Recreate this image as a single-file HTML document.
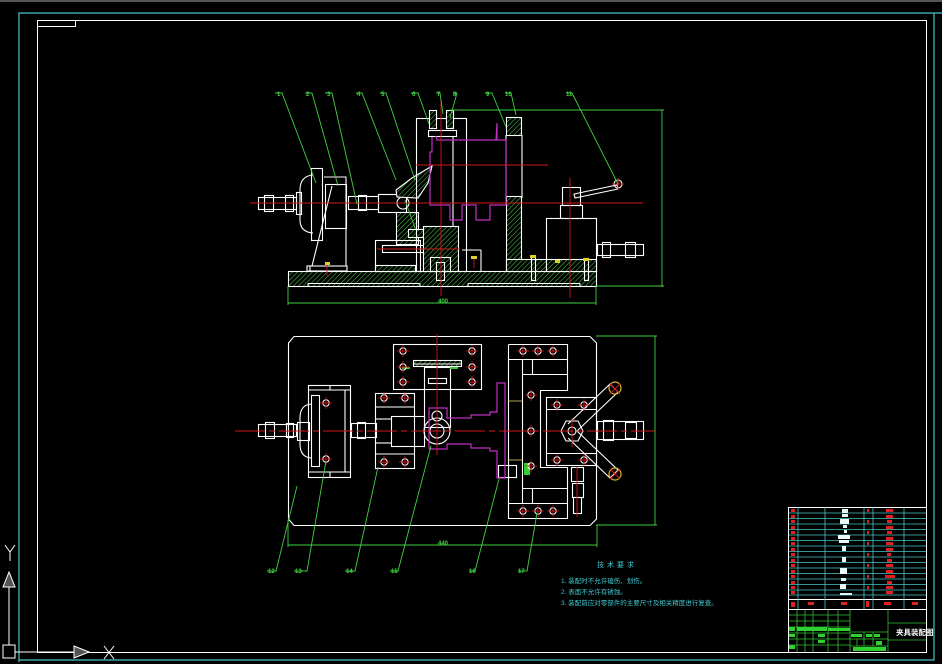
<!DOCTYPE html>
<html><head><meta charset="utf-8"><style>
html,body{margin:0;padding:0;background:#000;width:942px;height:664px;overflow:hidden}
svg{display:block}
text{font-family:"Liberation Sans","Noto Sans CJK SC",sans-serif}
</style></head><body>
<svg width="942" height="664" viewBox="0 0 942 664" xmlns="http://www.w3.org/2000/svg">
<defs>
<pattern id="ht" width="3.5" height="3.5" patternUnits="userSpaceOnUse" patternTransform="rotate(45)">
<rect width="4" height="4" fill="#000"/><line x1="0" y1="0" x2="0" y2="4" stroke="#4cd04c" stroke-width="1"/>
</pattern>
<g id="h"><circle r="3.2" fill="none" stroke="#fff" stroke-width="1"/><line x1="-6" y1="0" x2="6" y2="0" stroke="#e01010" stroke-width="0.8"/><line x1="0" y1="-6" x2="0" y2="6" stroke="#e01010" stroke-width="0.8"/></g>
</defs>
<rect width="942" height="664" fill="#000"/>
<rect x="0" y="0" width="942" height="2" fill="#555"/>
<polyline points="19,662 19,13 942,13" fill="none" stroke="#46c6c6" stroke-width="1.2"/>
<polyline points="934,13 934,660 19,660" fill="none" stroke="#46c6c6" stroke-width="1.2"/>
<rect x="37.5" y="20.5" width="889" height="632" fill="none" stroke="#fff" stroke-width="1"/>
<polyline points="37.5,26.5 75.5,26.5 75.5,20.5" fill="none" stroke="#fff" stroke-width="1"/>
<g stroke="#fff" fill="none" stroke-width="1">
<rect x="3" y="645" width="12" height="13"/>
<line x1="9" y1="645" x2="9" y2="587"/>
<polygon points="9,572 3,587 15,587" fill="#555"/>
<line x1="15" y1="652" x2="74" y2="652"/>
<polygon points="89,652 74,646 74,658" fill="#555"/>
<path d="M5,545 L10,552 L15,545 M10,552 L10,561"/>
<path d="M104,646 L114,659 M114,646 L104,659"/>
</g>

<g stroke="#fff" stroke-width="1.1" fill="none">
<rect x="288.5" y="271.5" width="308" height="15" fill="url(#ht)"/>
<line x1="308" y1="283.5" x2="420" y2="283.5"/><line x1="308" y1="283.5" x2="308" y2="286"/><line x1="420" y1="283.5" x2="420" y2="286"/>
<line x1="468" y1="283.5" x2="580" y2="283.5"/><line x1="468" y1="283.5" x2="468" y2="286"/><line x1="580" y1="283.5" x2="580" y2="286"/>
<path d="M313,175 Q300,176 300,190 L300,220 Q300,232 313,233"/>
<rect x="311.5" y="168.5" width="11" height="72"/>
<rect x="325.5" y="184.5" width="21" height="44"/>
<polyline points="324,177 346,177 346,266"/>
<path d="M332,186 L312,266 L346,266 M310,266 L310,271"/>
<rect x="307" y="266" width="40" height="5"/>
<rect x="296.5" y="192.5" width="5" height="22"/>
<rect x="258.5" y="197.5" width="38" height="12"/>
<rect x="264.5" y="195.5" width="9" height="16"/><rect x="285.5" y="195.5" width="8" height="16"/>
<rect x="348.5" y="196.5" width="30" height="13"/>
<rect x="358.5" y="195.5" width="8" height="15"/>
<rect x="378.5" y="194.5" width="28" height="18"/>
<circle cx="403" cy="203" r="6"/>
<polygon points="396,190 412,178 432,166 428,183 418,198 397,197" fill="url(#ht)"/>
<rect x="396.5" y="212.5" width="22" height="32" fill="url(#ht)"/>
<rect x="408.5" y="229.5" width="18" height="8" fill="url(#ht)"/>
<rect x="375.5" y="240.5" width="45" height="31"/>
<rect x="382.5" y="245.5" width="60" height="7"/>
<rect x="375.5" y="265.5" width="40" height="6" fill="url(#ht)"/>
<rect x="416.5" y="118.5" width="50" height="153"/>
<rect x="429.5" y="110.5" width="7" height="18" fill="url(#ht)"/>
<rect x="446.5" y="110.5" width="7" height="18" fill="url(#ht)"/>
<rect x="428.5" y="130.5" width="28" height="6"/>
<line x1="453" y1="136" x2="453" y2="270"/>
<rect x="423.5" y="226.5" width="35" height="45" fill="url(#ht)"/>
<rect x="430.5" y="257.5" width="20" height="14"/>
<rect x="436.5" y="262.5" width="8" height="18"/>
<line x1="462" y1="250" x2="481" y2="250"/><line x1="481" y1="250" x2="481" y2="271"/>
<rect x="506.5" y="117.5" width="15" height="18" fill="url(#ht)"/>
<rect x="506.5" y="196.5" width="15" height="75" fill="url(#ht)"/>
<line x1="506" y1="135" x2="506" y2="198"/><line x1="522" y1="135" x2="522" y2="198"/>
<rect x="506.5" y="259.5" width="40" height="12" fill="url(#ht)"/>
<rect x="546.5" y="218.5" width="50" height="53"/>
<rect x="546.5" y="259.5" width="50" height="12" fill="url(#ht)"/>
<rect x="560.5" y="205.5" width="22" height="13"/>
<rect x="562.5" y="187.5" width="18" height="18"/>
<path d="M574,194 L617,185 L618,189 L575,198 Z"/>
<circle cx="618" cy="184" r="4" stroke="#fff"/>
<rect x="597.5" y="244.5" width="46" height="11"/>
<rect x="602.5" y="242.5" width="8" height="15"/><rect x="625.5" y="242.5" width="10" height="15"/>
<rect x="531.5" y="256.5" width="4" height="24"/><rect x="584.5" y="258.5" width="4" height="22"/>
</g>
<polyline points="432,137 432,152 430,152 430,205 450,205 450,220 462,220 462,205 476,205 476,220 490,220 490,205 506,205 506,140 497,140 497,123 496,140 437,140 436,136" fill="none" stroke="#c030c0" stroke-width="1.2"/>
<g stroke="#d01818" stroke-width="0.9">
<line x1="250" y1="203" x2="643" y2="203"/>
<line x1="416" y1="165" x2="548" y2="165"/>
<line x1="441" y1="100" x2="441" y2="296"/>
<line x1="570" y1="178" x2="570" y2="298"/>
<line x1="377" y1="249" x2="460" y2="249"/>
<line x1="327" y1="262" x2="327" y2="276"/><line x1="474" y1="256" x2="474" y2="268"/>
<line x1="612" y1="184" x2="624" y2="184"/><line x1="618" y1="178" x2="618" y2="190"/>
</g>
<g fill="#e0d020"><rect x="325" y="262" width="5" height="3"/><rect x="471" y="256" width="6" height="3"/><rect x="530" y="255" width="6" height="3"/><rect x="555" y="260" width="5" height="3"/><rect x="583" y="258" width="6" height="3"/></g>
<g stroke="#40d040" stroke-width="0.9" fill="none">
<line x1="450" y1="110" x2="664" y2="110"/><line x1="662" y1="110" x2="662" y2="287"/><line x1="596" y1="286" x2="664" y2="286"/>
<line x1="288" y1="303" x2="596" y2="303"/><line x1="288" y1="286" x2="288" y2="305"/><line x1="596" y1="286" x2="596" y2="305"/>
<polyline points="275,93 282,93 316,183"/><polyline points="305,93 312,93 338,186"/><polyline points="325,93 332,93 357,204"/>
<polyline points="356,93 362,93 396,180"/><polyline points="380,93 386,93 415,180"/><polyline points="411,93 418,93 429,124"/>
<polyline points="436,93 440,93 443,114"/><polyline points="453,93 457,93 450,118"/><polyline points="485,93 492,93 506,127"/>
<polyline points="505,93 511,93 516,115"/><polyline points="566,93 572,93 618,184"/>
<line x1="405" y1="200" x2="415" y2="228"/>
</g>
<g fill="#40d040" font-size="6" font-weight="bold">
<text x="277" y="96">1</text><text x="306" y="96">2</text><text x="327" y="96">3</text><text x="357" y="96">4</text><text x="381" y="96">5</text><text x="412" y="96">6</text><text x="437" y="96">7</text><text x="453" y="96">8</text><text x="486" y="96">9</text><text x="505" y="96">10</text><text x="566" y="96">11</text>
<text x="438" y="303">400</text>
</g>

<g stroke="#fff" stroke-width="1.1" fill="none">
<polygon points="294,336.5 590,336.5 596.5,343 596.5,519 590,525.5 294,525.5 288.5,519 288.5,343"/>
<rect x="308.5" y="385.5" width="42" height="92"/>
<line x1="308" y1="390" x2="350" y2="390"/><line x1="308" y1="472" x2="350" y2="472"/>
<line x1="345" y1="390" x2="345" y2="472"/><line x1="330" y1="385" x2="330" y2="390"/><line x1="330" y1="472" x2="330" y2="477"/>
<rect x="311.5" y="395.5" width="8" height="71"/>
<path d="M311,404 Q300,405 300,418 L300,444 Q300,457 311,458"/>
<rect x="297.5" y="422.5" width="12" height="18"/>
<rect x="258.5" y="424.5" width="38" height="12"/>
<rect x="265.5" y="422.5" width="9" height="16"/><rect x="286.5" y="423.5" width="7" height="14"/>
<rect x="351.5" y="423.5" width="25" height="14"/><rect x="357.5" y="422.5" width="8" height="16"/>
<rect x="375.5" y="393.5" width="39" height="75"/>
<line x1="375" y1="407" x2="414" y2="407"/><line x1="375" y1="454" x2="414" y2="454"/>
<rect x="391.5" y="416.5" width="33" height="30"/>
<line x1="375" y1="419" x2="391" y2="419"/><line x1="375" y1="443" x2="391" y2="443"/>
<rect x="393.5" y="344.5" width="88" height="45"/>
<rect x="413.5" y="360.5" width="48" height="6" fill="url(#ht)"/>
<line x1="413" y1="364" x2="461" y2="364"/>
<rect x="424.5" y="367.5" width="26" height="60"/>
<rect x="428.5" y="378.5" width="18" height="5"/>
<circle cx="437" cy="431" r="13"/><circle cx="437" cy="431" r="7"/>
<circle cx="437" cy="416" r="5"/>
<polyline points="508.5,344.5 567.5,344.5 567.5,390.5 540.5,390.5 540.5,467.5 567.5,467.5 567.5,518.5 508.5,518.5 508.5,344.5"/>
<line x1="508" y1="359.5" x2="567" y2="359.5"/><line x1="508" y1="503.5" x2="567" y2="503.5"/>
<line x1="522.5" y1="359" x2="522.5" y2="503"/>
<line x1="522" y1="374.5" x2="567" y2="374.5"/><line x1="522" y1="488.5" x2="567" y2="488.5"/>
<line x1="532.5" y1="359" x2="532.5" y2="374"/><line x1="532.5" y1="488" x2="532.5" y2="503"/>
<rect x="546.5" y="397.5" width="50" height="68"/>
<line x1="546" y1="409.5" x2="596" y2="409.5"/><line x1="546" y1="453.5" x2="596" y2="453.5"/>
<polygon points="566,421 578,421 583,431 578,441 566,441 561,431"/>
<circle cx="572" cy="431" r="4"/>
<path d="M568,424 L610,384 L618,392 L577,431 M568,438 L610,478 L618,470 L577,431"/>
<rect x="597.5" y="421.5" width="46" height="18"/>
<rect x="603.5" y="420.5" width="10" height="20"/><rect x="625.5" y="422.5" width="11" height="16"/>
<rect x="571.5" y="467.5" width="12" height="14"/><rect x="572.5" y="483.5" width="11" height="14"/><rect x="573.5" y="497.5" width="8" height="16"/>
<rect x="498.5" y="465.5" width="18" height="12"/>
</g>
<g stroke="#e0b030" fill="none" stroke-width="1.2"><circle cx="615" cy="388" r="6"/><circle cx="615" cy="474" r="6"/></g>
<g stroke="#e0d060" stroke-width="0.8"><line x1="508" y1="401" x2="522" y2="401"/><line x1="508" y1="460" x2="522" y2="460"/></g>
<polyline points="429,449 429,408 447,408 447,418 471,418 471,415 490,415 490,412 497,412 497,383 505,383 505,478 497,478 497,451 490,451 490,448 471,448 471,444 447,444 447,449 429,449" fill="none" stroke="#c030c0" stroke-width="1.2"/>
<g fill="#30d030"><rect x="524" y="463" width="6" height="12"/><rect x="402" y="367" width="8" height="2"/><rect x="450" y="367" width="8" height="2"/></g>
<g stroke="#d01818" stroke-width="0.9">
<line x1="235" y1="431" x2="655" y2="431" stroke-dasharray="30,4,6,4"/>
<line x1="437" y1="334" x2="437" y2="455"/>
<line x1="572" y1="418" x2="572" y2="447"/>
<line x1="610" y1="384" x2="620" y2="394"/><line x1="610" y1="394" x2="620" y2="384"/>
<line x1="610" y1="469" x2="620" y2="479"/><line x1="610" y1="479" x2="620" y2="469"/>
<line x1="577" y1="467" x2="577" y2="517"/>
</g>
<g>
<use href="#h" x="326" y="403"/><use href="#h" x="326" y="459"/>
<use href="#h" x="384" y="398"/><use href="#h" x="405" y="398"/><use href="#h" x="384" y="462"/><use href="#h" x="405" y="462"/>
<use href="#h" x="403" y="351"/><use href="#h" x="472" y="351"/><use href="#h" x="403" y="367"/><use href="#h" x="472" y="367"/><use href="#h" x="403" y="382"/><use href="#h" x="472" y="382"/>
<use href="#h" x="523" y="351"/><use href="#h" x="538" y="351"/><use href="#h" x="553" y="351"/>
<use href="#h" x="531" y="395"/><use href="#h" x="531" y="431"/><use href="#h" x="531" y="466"/>
<use href="#h" x="523" y="511"/><use href="#h" x="538" y="511"/><use href="#h" x="553" y="511"/>
<use href="#h" x="557" y="405"/><use href="#h" x="584" y="405"/><use href="#h" x="557" y="460"/><use href="#h" x="584" y="460"/>
</g>
<g stroke="#40d040" stroke-width="0.9" fill="none">
<line x1="596" y1="336" x2="657" y2="336"/><line x1="655" y1="336" x2="655" y2="525"/><line x1="596" y1="525" x2="657" y2="525"/>
<line x1="288" y1="545" x2="597" y2="545"/><line x1="288" y1="520" x2="288" y2="547"/><line x1="597" y1="525" x2="597" y2="547"/>
<polyline points="267,571 276,571 297,486"/><polyline points="294,571 307,571 326,461"/>
<polyline points="345,571 355,571 378,467"/><polyline points="390,571 398,571 431,446"/>
<polyline points="469,571 475,571 499,479"/><polyline points="518,571 527,571 537,513"/>
</g>
<g fill="#40d040" font-size="6" font-weight="bold">
<text x="268" y="573">12</text><text x="295" y="573">13</text><text x="346" y="573">14</text><text x="391" y="573">15</text><text x="469" y="573">16</text><text x="518" y="573">17</text>
<text x="438" y="545">440</text>
</g>

<g fill="#40c8d0" font-family="'Liberation Sans','Noto Sans CJK SC',sans-serif">
<text x="597" y="567" font-size="7" letter-spacing="3">技术要求</text>
<text x="561" y="583" font-size="6.5">1. 装配时不允许磕伤、划伤。</text>
<text x="561" y="594" font-size="6.5">2. 表面不允许有锈蚀。</text>
<text x="561" y="605" font-size="6.5">3. 装配前应对零部件的主要尺寸及相关精度进行复查。</text>
</g>

<g stroke="#fff" stroke-width="1" fill="none">
<rect x="788.5" y="507.5" width="138" height="145"/>
<line x1="788" y1="599.5" x2="926" y2="599.5"/><line x1="788" y1="609.5" x2="926" y2="609.5"/>
</g>
<g stroke="#46c6c6" stroke-width="0.8">
<line x1="789" y1="513" x2="926" y2="513"/><line x1="789" y1="518.5" x2="926" y2="518.5"/><line x1="789" y1="524" x2="926" y2="524"/><line x1="789" y1="529.5" x2="926" y2="529.5"/><line x1="789" y1="535" x2="926" y2="535"/><line x1="789" y1="540.5" x2="926" y2="540.5"/><line x1="789" y1="546" x2="926" y2="546"/><line x1="789" y1="551.5" x2="926" y2="551.5"/><line x1="789" y1="557" x2="926" y2="557"/><line x1="789" y1="562.5" x2="926" y2="562.5"/><line x1="789" y1="568" x2="926" y2="568"/><line x1="789" y1="573.5" x2="926" y2="573.5"/><line x1="789" y1="579" x2="926" y2="579"/><line x1="789" y1="584.5" x2="926" y2="584.5"/><line x1="789" y1="590" x2="926" y2="590"/><line x1="789" y1="595" x2="926" y2="595"/>
<line x1="798" y1="507" x2="798" y2="609"/><line x1="825" y1="507" x2="825" y2="609"/><line x1="864" y1="507" x2="864" y2="609"/><line x1="873" y1="507" x2="873" y2="609"/><line x1="904" y1="507" x2="904" y2="609"/>
</g>
<g fill="#e02020">
<rect x="791" y="509" width="4" height="3"/><rect x="791" y="515" width="4" height="3"/><rect x="791" y="520" width="4" height="3"/><rect x="791" y="526" width="4" height="3"/><rect x="791" y="531" width="4" height="3"/><rect x="791" y="537" width="4" height="3"/><rect x="791" y="542" width="4" height="3"/><rect x="791" y="548" width="4" height="3"/><rect x="791" y="553" width="4" height="3"/><rect x="791" y="559" width="4" height="3"/><rect x="791" y="564" width="4" height="3"/><rect x="791" y="570" width="4" height="3"/><rect x="791" y="575" width="4" height="3"/><rect x="791" y="581" width="4" height="3"/><rect x="791" y="586" width="4" height="3"/><rect x="791" y="591" width="4" height="3"/>
<rect x="886" y="509" width="7" height="3"/><rect x="886" y="515" width="7" height="3"/><rect x="887" y="520" width="5" height="3"/><rect x="886" y="526" width="7" height="3"/><rect x="887" y="531" width="5" height="3"/><rect x="886" y="537" width="7" height="3"/><rect x="886" y="542" width="7" height="3"/><rect x="886" y="548" width="7" height="3"/><rect x="887" y="553" width="4" height="3"/><rect x="887" y="559" width="5" height="3"/><rect x="886" y="564" width="7" height="3"/><rect x="886" y="570" width="7" height="3"/><rect x="885" y="575" width="10" height="3"/><rect x="887" y="581" width="5" height="3"/><rect x="886" y="586" width="7" height="3"/><rect x="886" y="591" width="7" height="3"/>
<rect x="867" y="509" width="2" height="3"/><rect x="867" y="520" width="2" height="3"/><rect x="867" y="531" width="2" height="3"/><rect x="867" y="542" width="2" height="3"/><rect x="867" y="553" width="2" height="3"/><rect x="867" y="564" width="2" height="3"/><rect x="867" y="575" width="2" height="3"/><rect x="867" y="586" width="2" height="3"/>
<rect x="791" y="602" width="4" height="5"/><rect x="808" y="602" width="6" height="3"/><rect x="841" y="602" width="6" height="3"/><rect x="866" y="601" width="3" height="6"/><rect x="884" y="602" width="7" height="3"/><rect x="912" y="602" width="6" height="3"/>
</g>
<g fill="#e8f8f8">
<rect x="842" y="509" width="6" height="4"/><rect x="842" y="514" width="6" height="3"/><rect x="840" y="519" width="9" height="5"/><rect x="843" y="525" width="4" height="3"/><rect x="844" y="530" width="3" height="3"/><rect x="838" y="535" width="12" height="4"/><rect x="839" y="540" width="10" height="3"/><rect x="842" y="546" width="4" height="5"/><rect x="842" y="557" width="4" height="5"/><rect x="840" y="568" width="7" height="6"/><rect x="841" y="578" width="5" height="3"/><rect x="840" y="584" width="6" height="5"/><rect x="840" y="593" width="12" height="2"/>
</g>
<g stroke="#30c030" stroke-width="0.8" fill="none">
<line x1="789" y1="615" x2="850" y2="615"/><line x1="789" y1="621" x2="850" y2="621"/><line x1="789" y1="627" x2="850" y2="627"/><line x1="789" y1="633" x2="850" y2="633"/><line x1="789" y1="639" x2="850" y2="639"/><line x1="789" y1="645" x2="850" y2="645"/>
<line x1="797" y1="610" x2="797" y2="652"/><line x1="805" y1="610" x2="805" y2="652"/><line x1="813" y1="610" x2="813" y2="652"/><line x1="828" y1="610" x2="828" y2="652"/><line x1="838" y1="610" x2="838" y2="652"/><line x1="850" y1="610" x2="850" y2="652"/>
<line x1="888" y1="610" x2="888" y2="652"/><line x1="888" y1="623" x2="926" y2="623"/><line x1="888" y1="640" x2="926" y2="640"/>
<line x1="850" y1="632" x2="888" y2="632"/><line x1="850" y1="639" x2="888" y2="639"/><line x1="850" y1="646" x2="888" y2="646"/>
<line x1="857" y1="639" x2="857" y2="646"/><line x1="864" y1="632" x2="864" y2="646"/><line x1="873" y1="632" x2="873" y2="646"/>
</g>
<g fill="#30d030">
<rect x="789" y="627" width="6" height="4"/><rect x="797" y="627" width="30" height="4"/><rect x="828" y="628" width="22" height="3"/><rect x="789" y="634" width="6" height="3"/><rect x="818" y="634" width="7" height="3"/><rect x="789" y="645" width="6" height="4"/><rect x="818" y="640" width="7" height="3"/><rect x="851" y="634" width="11" height="3"/><rect x="866" y="634" width="6" height="3"/><rect x="874" y="634" width="6" height="3"/><rect x="876" y="641" width="6" height="4"/><rect x="853" y="647" width="33" height="4"/>
</g>
<text x="896" y="635" fill="#fff" font-size="7.5" font-weight="bold" font-family="'Liberation Sans','Noto Sans CJK SC',sans-serif">夹具装配图</text>
</svg>
</body></html>
